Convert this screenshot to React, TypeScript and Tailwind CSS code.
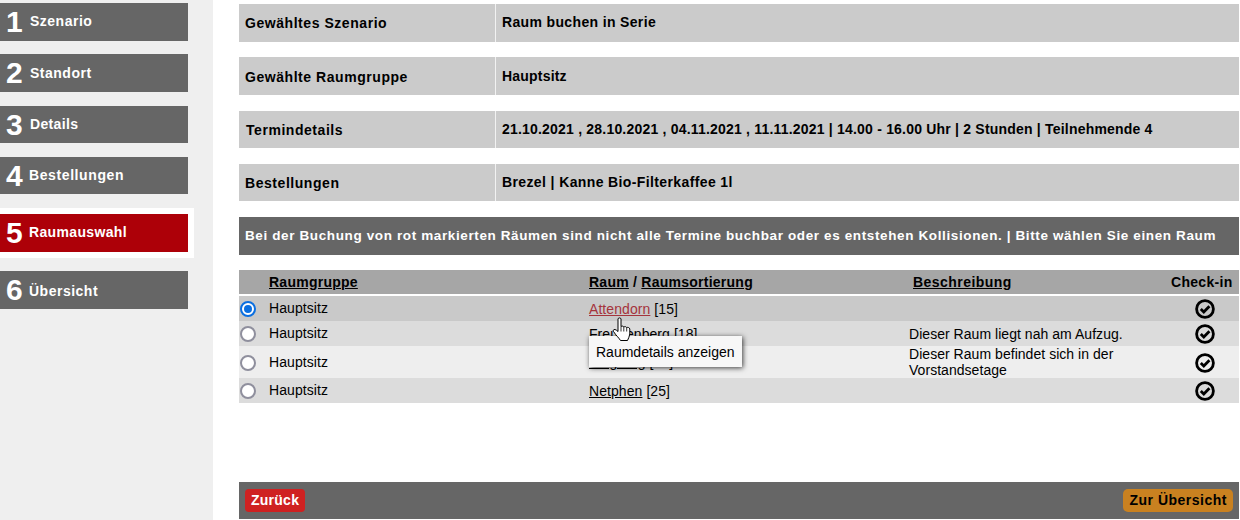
import React from "react";

const steps = [
  { n: "1", label: "Szenario", h: "h-[38px]", mt: "mt-[3px]", tx: "ml-[8px] tracking-[0.5px]", ly: "-mt-[2px]" },
  { n: "2", label: "Standort", h: "h-[38px]", mt: "mt-[13px]", tx: "ml-[8px] tracking-[0.5px]", ly: "" },
  { n: "3", label: "Details", h: "h-[37px]", mt: "mt-[14px]", tx: "ml-[8px] tracking-[0.35px]", ly: "" },
  { n: "4", label: "Bestellungen", h: "h-[37px]", mt: "mt-[14px]", tx: "ml-[7px] tracking-[0.6px]", ly: "" },
];

function Step({ n, label, h, mt, tx, ly, active }: { n: string; label: string; h: string; mt: string; tx: string; ly: string; active?: boolean }) {
  return (
    <div className={`${mt} ${h} w-[188px] flex items-center pl-[6px] text-white font-bold ${active ? "bg-[#ad0008]" : "bg-[#666666]"}`}>
      <span className="w-[16px] text-[30px] leading-none">{n}</span>
      <span className={`${tx} ${ly} text-[14px]`}>{label}</span>
    </div>
  );
}

function InfoRow({ label, value, h, mt, lx, ly, vy, vt }: { label: string; value: string; h: string; mt: string; lx: string; ly: string; vy: string; vt: string }) {
  return (
    <div className={`${mt} ${h} flex bg-[#cbcbcb] text-black font-bold`}>
      <div className={`w-[257px] flex items-center ${lx} ${ly} text-[14px] tracking-[0.55px] border-r border-[#f2f2f2]`}>{label}</div>
      <div className={`flex-1 flex items-center pl-[6px] ${vy} ${vt} text-[14px]`}>{value}</div>
    </div>
  );
}

function Check() {
  return (
    <svg width="20" height="20" viewBox="0 0 20 20" className="block">
      <circle cx="10" cy="10" r="8.4" fill="none" stroke="#000" strokeWidth="2.8" />
      <path d="M5.8 10 L8.8 13 L14.4 7.2" fill="none" stroke="#000" strokeWidth="2.8" />
    </svg>
  );
}

function Radio({ on }: { on?: boolean }) {
  return on ? (
    <span className="block w-[16px] h-[16px] rounded-full border-[2px] border-[#0b6fe0] bg-white p-[2px]">
      <span className="block w-full h-full rounded-full bg-[#0b6fe0]" />
    </span>
  ) : (
    <span className="block w-[16px] h-[16px] rounded-full border-[2px] border-[#8f8f9d] bg-white" />
  );
}

const rows = [
  { bg: "bg-[#c9c9c9]", h: "h-[25px]", on: true, room: "Attendorn", num: "[15]", desc: "", link: "text-[#a5343c]", y: "" },
  { bg: "bg-[#dcdcdc]", h: "h-[25px]", room: "Freudenberg", num: "[18]", desc: "Dieser Raum liegt nah am Aufzug.", link: "text-black", y: "" },
  { bg: "bg-[#eeeeee]", h: "h-[32px]", room: "Siegburg", num: "[12]", desc: "Dieser Raum befindet sich in der Vorstandsetage", link: "text-black", y: "pt-[1px]" },
  { bg: "bg-[#dcdcdc]", h: "h-[25px]", room: "Netphen", num: "[25]", desc: "", link: "text-black", y: "" },
];

export default function App() {
  return (
    <div className="w-[1240px] h-[520px] flex bg-white overflow-hidden [font-family:'Liberation_Sans',Arial,sans-serif]">
      <aside className="w-[213px] h-full bg-[#efefef] shrink-0">
        {steps.map((s) => (
          <Step key={s.n} {...s} />
        ))}
        <div className="mt-[14px] w-[194px] h-[50px] bg-white flex items-center">
          <Step n="5" label="Raumauswahl" h="h-[38px]" mt="" tx="ml-[7px] tracking-[0.35px]" ly="-mt-[2px]" active />
        </div>
        <Step n="6" label="Übersicht" h="h-[38px]" mt="mt-[13px]" tx="ml-[7px] tracking-[0.5px]" ly="pt-[2px]" />
      </aside>

      <main className="ml-[26px] w-[1000px] h-full flex flex-col text-black">
        <InfoRow mt="mt-[4px]" h="h-[38px]" lx="pl-[6px]" ly="" vy="-mt-[1px] pb-[1px]" vt="tracking-[0.35px]" label="Gewähltes Szenario" value="Raum buchen in Serie" />
        <InfoRow mt="mt-[15px]" h="h-[38px]" lx="pl-[6px]" ly="pt-[2px]" vy="pt-[1px]" vt="tracking-[0.2px]" label="Gewählte Raumgruppe" value="Hauptsitz" />
        <InfoRow mt="mt-[16px]" h="h-[37px]" lx="pl-[7px]" ly="pt-[1px]" vy="pb-[1px]" vt="tracking-[0.2px]" label="Termindetails" value="21.10.2021 , 28.10.2021 , 04.11.2021 , 11.11.2021 | 14.00 - 16.00 Uhr | 2 Stunden | Teilnehmende 4" />
        <InfoRow mt="mt-[16px]" h="h-[37px]" lx="pl-[6px]" ly="pt-[2px]" vy="" vt="tracking-[0.38px]" label="Bestellungen" value="Brezel | Kanne Bio-Filterkaffee 1l" />

        <div className="mt-[16px] h-[38px] bg-[#666666] text-white font-bold text-[13.5px] tracking-[0.62px] flex items-center pl-[6px]">
          Bei der Buchung von rot markierten Räumen sind nicht alle Termine buchbar oder es entstehen Kollisionen. | Bitte wählen Sie einen Raum
        </div>

        <div className="mt-[15px] h-[24px] bg-[#a6a6a6] flex items-center font-bold text-[14px] tracking-[0.25px]">
          <span className="w-[30px] shrink-0" />
          <span className="w-[320px] shrink-0 underline">Raumgruppe</span>
          <span className="w-[324px] shrink-0"><span className="underline">Raum</span> / <span className="underline">Raumsortierung</span></span>
          <span className="w-[258px] shrink-0 underline tracking-[0.45px]">Beschreibung</span>
          <span className="tracking-[0.3px]">Check-in</span>
        </div>

        <div className="relative mt-[2px] text-[14px] leading-[16px] tracking-[0.07px]">
          {rows.map((r) => (
            <div key={r.room} className={`${r.h} ${r.bg} flex items-center`}>
              <span className={`w-[30px] pl-[1px] shrink-0 ${r.y}`}><Radio on={r.on} /></span>
              <span className="w-[320px] shrink-0 -mt-[1px]">Hauptsitz</span>
              <span className="w-[320px] shrink-0"><a className={`underline ${r.link}`}>{r.room}</a> {r.num}</span>
              <span className="w-[240px] shrink-0 tracking-[0.04px]">{r.desc}</span>
              <span className={`ml-[46px] ${r.y}`}><Check /></span>
            </div>
          ))}

          <div className="absolute left-[350px] top-[40px] w-[153px] h-[31px] bg-[#f7f7f7] shadow-[1px_1px_5px_rgba(0,0,0,0.75)] flex items-center pl-[7px] text-[14px] tracking-normal whitespace-nowrap">
            Raumdetails anzeigen
          </div>
          <svg className="absolute left-[373px] top-[21px]" width="22" height="25" viewBox="0 0 22 25">
            <path d="M6 2 C6 0.6 9 0.6 9 2 V9.5 C10 8.8 11.3 9 11.8 10 C12.8 9.3 14.2 9.6 14.7 10.6 C15.8 10 17.6 10.6 17.8 12 V17 C17.5 19.5 16.5 21 15.5 23.5 H8.5 C7.5 21.5 4 18.5 1.5 14.5 C0.5 12.8 2.5 11 6 14.5 Z" fill="#fff" stroke="#000" strokeWidth="1" />
            <path d="M9 9.5 V14.5 M11.8 10 V14.5 M14.7 10.6 V14.5" fill="none" stroke="#000" strokeWidth="0.8" />
          </svg>
        </div>

        <div className="mt-[79px] h-[37px] bg-[#666666] flex items-center justify-between pl-[6px] pr-[6px] font-bold text-[14px]">
          <span className="h-[23px] px-[6px] rounded-[4px] bg-[#cf2121] text-white flex items-center tracking-[0.25px]">Zurück</span>
          <span className="h-[23px] px-[6px] rounded-[5px] bg-[#c98120] text-black flex items-center tracking-[0.5px]">Zur Übersicht</span>
        </div>
      </main>
    </div>
  );
}
